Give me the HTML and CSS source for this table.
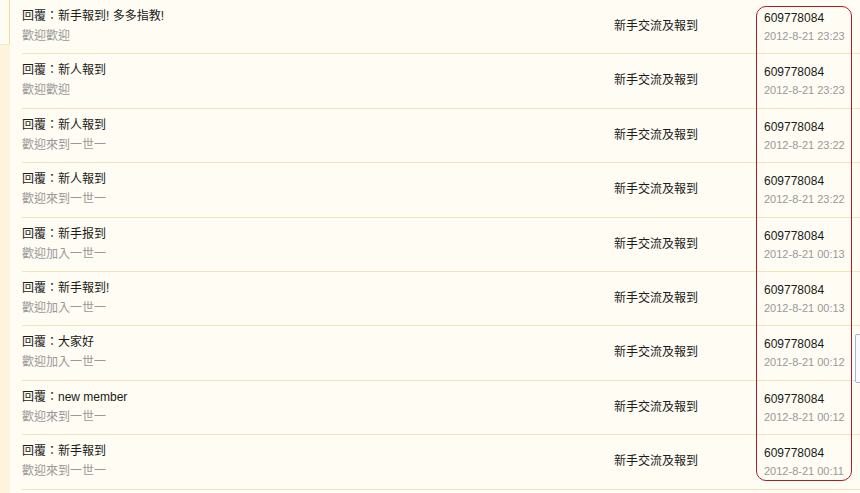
FILE: index.html
```html
<!DOCTYPE html>
<html>
<head>
<meta charset="utf-8">
<link rel="stylesheet" href="styles.css">
</head>
<body>
<div class="page">
  <aside class="side"><div class="side-top"></div></aside>
  <main class="list">
    <div class="row">
      <div class="topic"><div class="title">回覆：新手報到! 多多指教!</div><div class="sub">歡迎歡迎</div></div>
      <div class="forum">新手交流及報到</div>
      <div class="author"><div class="uid">609778084</div><div class="date">2012-8-21 23:23</div></div>
    </div>
    <div class="row">
      <div class="topic"><div class="title">回覆：新人報到</div><div class="sub">歡迎歡迎</div></div>
      <div class="forum">新手交流及報到</div>
      <div class="author"><div class="uid">609778084</div><div class="date">2012-8-21 23:23</div></div>
    </div>
    <div class="row">
      <div class="topic"><div class="title">回覆：新人報到</div><div class="sub">歡迎來到一世一</div></div>
      <div class="forum">新手交流及報到</div>
      <div class="author"><div class="uid">609778084</div><div class="date">2012-8-21 23:22</div></div>
    </div>
    <div class="row">
      <div class="topic"><div class="title">回覆：新人報到</div><div class="sub">歡迎來到一世一</div></div>
      <div class="forum">新手交流及報到</div>
      <div class="author"><div class="uid">609778084</div><div class="date">2012-8-21 23:22</div></div>
    </div>
    <div class="row">
      <div class="topic"><div class="title">回覆：新手报到</div><div class="sub">歡迎加入一世一</div></div>
      <div class="forum">新手交流及報到</div>
      <div class="author"><div class="uid">609778084</div><div class="date">2012-8-21 00:13</div></div>
    </div>
    <div class="row">
      <div class="topic"><div class="title">回覆：新手報到!</div><div class="sub">歡迎加入一世一</div></div>
      <div class="forum">新手交流及報到</div>
      <div class="author"><div class="uid">609778084</div><div class="date">2012-8-21 00:13</div></div>
    </div>
    <div class="row">
      <div class="topic"><div class="title">回覆：大家好</div><div class="sub">歡迎加入一世一</div></div>
      <div class="forum">新手交流及報到</div>
      <div class="author"><div class="uid">609778084</div><div class="date">2012-8-21 00:12</div></div>
    </div>
    <div class="row">
      <div class="topic"><div class="title">回覆：new member</div><div class="sub">歡迎來到一世一</div></div>
      <div class="forum">新手交流及報到</div>
      <div class="author"><div class="uid">609778084</div><div class="date">2012-8-21 00:12</div></div>
    </div>
    <div class="row">
      <div class="topic"><div class="title">回覆：新手報到</div><div class="sub">歡迎來到一世一</div></div>
      <div class="forum">新手交流及報到</div>
      <div class="author"><div class="uid">609778084</div><div class="date">2012-8-21 00:11</div></div>
    </div>
  </main>
</div>
<div class="highlight"></div>
<div class="tip"></div>
</body>
</html>
```
FILE: styles.css
```css
html, body {
  margin: 0;
  padding: 0;
  height: 493px;
  overflow: hidden;
  background: #fffcf3;
}
body {
  position: relative;
  font-family: "Liberation Sans", "Noto Sans CJK TC", sans-serif;
  font-size: 12px;
  color: #1a1a1a;
}
.page {
  display: flex;
  height: 493px;
}
.side {
  width: 10px;
  flex: none;
  background: #fcf4dc;
}
.side-top {
  height: 45px;
  background: #fffcf1;
  border-right: 1px solid #efdca0;
  border-bottom: 1px solid #f6eac8;
  box-sizing: border-box;
}
.list {
  flex: 1;
  padding-left: 12px;
}
.row {
  display: grid;
  grid-template-columns: 592px 150px 1fr;
  height: 53.4px;
  border-bottom: 1px solid #f1e4bc;
}
.topic {
  padding-top: 6px;
}
.title {
  line-height: 20px;
  color: #1a1a1a;
}
.sub {
  line-height: 20px;
  color: #999;
}
.forum {
  padding-top: 16px;
  line-height: 20px;
  color: #1a1a1a;
}
.author {
  padding-top: 9px;
}
.uid {
  line-height: 18px;
  color: #1a1a1a;
}
.date {
  line-height: 18px;
  font-size: 11px;
  color: #999;
}
.highlight {
  position: absolute;
  left: 756px;
  top: 6px;
  width: 96px;
  height: 475px;
  box-sizing: border-box;
  border: 1px solid #b01c2a;
  border-radius: 10px;
}
.tip {
  position: absolute;
  left: 855px;
  top: 334px;
  width: 12px;
  height: 49px;
  box-sizing: border-box;
  border: 1px solid #9fb8d8;
  border-radius: 2px;
  background: #f8fbff;
}
```
